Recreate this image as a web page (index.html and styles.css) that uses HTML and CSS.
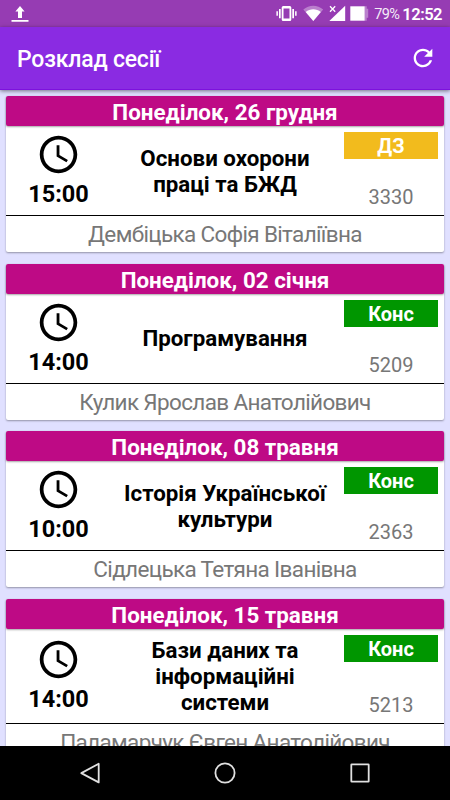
FILE: index.html
```html
<!DOCTYPE html>
<html lang="uk">
<head>
<meta charset="utf-8">
<title>Розклад сесії</title>
<link rel="stylesheet" href="styles.css">
</head>
<body>
<svg class="defs" aria-hidden="true">
  <symbol id="clock" viewBox="0 0 24 24"><path d="M11.99 2C6.47 2 2 6.48 2 12s4.47 10 9.99 10C17.52 22 22 17.52 22 12S17.52 2 11.99 2zM12 20c-4.42 0-8-3.58-8-8s3.58-8 8-8 8 3.58 8 8-3.58 8-8 8zm.5-13H11v6l5.25 3.15.75-1.23-4.5-2.67z"/></symbol>
</svg>
<div class="screen">
  <div class="status">
    <svg class="upload" viewBox="0 0 18 18"><path fill="#fff" d="M9 1l4.600 5.500H11V13H7V6.500H4.400zM.5 15h17v1.800H.5z"/></svg>
    <svg class="signals" viewBox="0 0 94 18">
      <g fill="#fff">
        <path fill-rule="evenodd" d="M7.200 1h6.600a1.500 1.500 0 0 1 1.500 1.500v12a1.500 1.500 0 0 1-1.500 1.500H7.200a1.500 1.500 0 0 1-1.500-1.500v-12A1.500 1.500 0 0 1 7.200 1zm.3 2.500v10h6v-10z"/>
        <path d="M3 4h1.700v9.200H3zM.4 6.200h1.500v4.600H.4zM16.300 4H18v9.200h-1.700zM19.100 6.200h1.500v4.600h-1.500z"/>
        <path opacity=".35" d="M27.300 4.500C33-.6 41.500-.6 47.200 4.500L37.300 16z"/>
        <path d="M29.700 7C34 3.300 40.500 3.300 44.800 7L37.300 16z"/>
        <path d="M53.300 16L69.200.8V16z"/>
        <path d="M74.300 1.300h14.400v14.400H74.300z"/>
        <path opacity=".35" d="M88.700 1.300h2v2.500h1.500v9h-1.500v2.900h-2z"/>
      </g>
      <path d="M53.500 1l6 6m0-6l-6 6" stroke="#963cb3" stroke-width="3.500"/>
      <path d="M54 1.300l5.200 5.400m0-5.400L54 6.700" stroke="#fff" stroke-width="1.300"/>
    </svg>
    <span class="percent">79%</span>
    <span class="now">12:52</span>
  </div>
  <header class="appbar">
    <h1>Розклад сесії</h1>
    <svg class="refresh" viewBox="0 0 24 24"><path fill="#fff" d="M17.650 6.350C16.200 4.900 14.210 4 12 4c-4.420 0-7.990 3.580-7.990 8s3.570 8 7.990 8c3.730 0 6.840-2.550 7.730-6h-2.080c-.82 2.330-3.040 4-5.650 4-3.310 0-6-2.690-6-6s2.690-6 6-6c1.660 0 3.140.69 4.220 1.780L13 11h7V4l-2.350 2.350z"/></svg>
  </header>
  <main class="list">
    <article class="card">
      <h2>Понеділок, 26 грудня</h2>
      <div class="body">
        <div class="time"><svg><use href="#clock"/></svg><b>15:00</b></div>
        <h3>Основи охорони<br>праці та БЖД</h3>
        <div class="side"><span class="tag credit">ДЗ</span><span class="room">3330</span></div>
      </div>
      <p>Дембіцька Софія Віталіївна</p>
    </article>
    <article class="card">
      <h2>Понеділок, 02 січня</h2>
      <div class="body">
        <div class="time"><svg><use href="#clock"/></svg><b>14:00</b></div>
        <h3>Програмування</h3>
        <div class="side"><span class="tag">Конс</span><span class="room">5209</span></div>
      </div>
      <p>Кулик Ярослав Анатолійович</p>
    </article>
    <article class="card">
      <h2>Понеділок, 08 травня</h2>
      <div class="body">
        <div class="time"><svg><use href="#clock"/></svg><b>10:00</b></div>
        <h3>Історія Української<br>культури</h3>
        <div class="side"><span class="tag">Конс</span><span class="room">2363</span></div>
      </div>
      <p>Сідлецька Тетяна Іванівна</p>
    </article>
    <article class="card tall">
      <h2>Понеділок, 15 травня</h2>
      <div class="body">
        <div class="time"><svg><use href="#clock"/></svg><b>14:00</b></div>
        <h3>Бази даних та<br>інформаційні<br>системи</h3>
        <div class="side"><span class="tag">Конс</span><span class="room">5213</span></div>
      </div>
      <p>Паламарчук Євген Анатолійович</p>
    </article>
  </main>
  <nav class="navbar">
    <svg viewBox="0 0 24 24"><path d="M20.700 2.800v18.600L3.300 12.100z"/></svg>
    <svg viewBox="0 0 24 24"><circle cx="12" cy="12" r="9.600"/></svg>
    <svg viewBox="0 0 24 24"><rect x="3.300" y="3.300" width="17.400" height="17.400" rx=".5"/></svg>
  </nav>
</div>
</body>
</html>
```
FILE: styles.css
```css
* { box-sizing: border-box; margin: 0; }
body { font-family: Roboto, "Noto Sans", sans-serif; }
.defs { display: none; }
.screen { width: 450px; height: 800px; display: flex; flex-direction: column; overflow: hidden; background: #e0e0ff; }

.status { height: 27px; flex: none; display: flex; align-items: center; background: #963cb3; color: #fff; padding: 0 9px 0 11px; }
.upload { width: 18px; height: 18px; margin-top: 1px; }
.signals { width: 94px; height: 18px; margin-left: auto; }
.percent { width: 25px; font-size: 14.500px; letter-spacing: -.7px; margin-left: 4px; opacity: .9; white-space: nowrap; margin-top: 1px; }
.now { font-size: 16.500px; font-weight: 600; letter-spacing: -.5px; margin-left: 3px; margin-right: -1px; margin-top: 1px; }

.appbar { height: 63px; flex: none; display: flex; align-items: center; justify-content: space-between; padding: 3px 12px 0 17px; background: #8a2be2; border-bottom: 1px solid #7d12dd; box-shadow: 0 1px 4px rgba(0, 0, 0, .5); position: relative; color: #fff; }
.appbar h1 { font-size: 23px; letter-spacing: -.2px; font-weight: 500; line-height: 28px; margin-top: 1px; }
.refresh { width: 28px; height: 28px; margin-top: -3px; margin-right: 1px; }

.list { flex: 1; min-height: 0; overflow: hidden; padding: 6px 6px 0; display: flex; flex-direction: column; gap: 11.500px; }
.card { flex: none; height: 156px; display: flex; flex-direction: column; background: #fff; border-radius: 2px; box-shadow: 0 1px 2px rgba(0, 0, 0, .35); text-align: center; }
.tall { height: 161.500px; }
.card h2 { flex: none; height: 30px; background: #be0a85; color: #fff; border-radius: 2px; box-shadow: 0 1px 2px rgba(0, 0, 0, .35); font-size: 22.400px; font-weight: 700; line-height: 32px; }
.body { flex: 1; display: grid; grid-template-columns: 105px 1fr 105px; }
.time { display: flex; flex-direction: column; align-items: center; justify-content: center; }
.time svg { width: 45px; height: 45px; display: block; }
.time b { font-size: 23.500px; font-weight: 700; line-height: 30px; padding-top: 2px; }
.card h3 { align-self: center; padding-top: 1px; font-size: 22.300px; font-weight: 700; line-height: 26.400px; }
.side { display: flex; flex-direction: column; justify-content: space-between; padding: 6px 6px 5px 5px; }
.tag { height: 27px; background: #009600; color: #fff; font-size: 20px; font-weight: 700; line-height: 29px; }
.credit { background: #f2bb1d; }
.room { font-size: 20px; line-height: 26px; color: #777; }
.card p { flex: none; height: 37px; border-top: 1px solid #000; color: #777; font-size: 22.500px; letter-spacing: -.65px; line-height: 36px; }

.navbar { height: 54px; flex: none; display: flex; align-items: center; justify-content: center; gap: 111px; background: #000; }
.navbar svg { width: 24px; height: 24px; fill: none; stroke: #e0e0e0; stroke-width: 1.800; stroke-linejoin: round; }
```
